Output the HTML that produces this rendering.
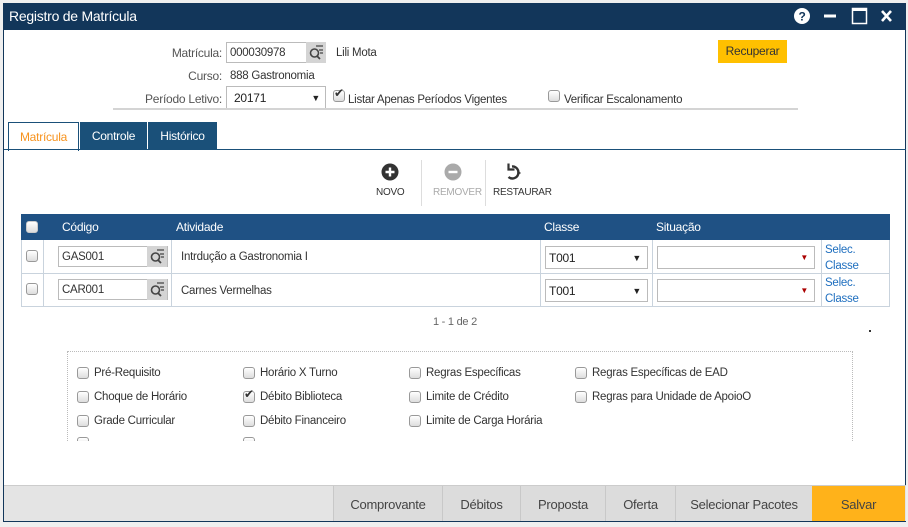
<!DOCTYPE html>
<html><head><meta charset="utf-8">
<style>
*{box-sizing:border-box;margin:0;padding:0}
body{width:908px;height:527px;background:#efefef;font-family:"Liberation Sans",sans-serif;font-size:11px;color:#333;position:relative;overflow:hidden;letter-spacing:-0.25px}
.a{position:absolute}
.win{left:3px;top:3px;width:903px;height:519px;background:#fff;border:1px solid #12365a}
.title{left:3px;top:3px;width:903px;height:27px;background:#12365a;color:#fff;font-size:14px;line-height:27px;padding-left:6px}
.t{white-space:nowrap}
.inp{border:1px solid #bbb;background:#fff;height:21px;line-height:19px;padding-left:3px}
.srch{background:#d4d4d4}
.cb{width:12px;height:12px;border:1px solid #999;border-radius:3px;background:linear-gradient(#fff,#ddd)}
.tab{top:122px;height:28px;line-height:28px;text-align:center;font-size:12px;color:#fff;background:#1a5079}
.hdr{left:21px;top:214px;width:869px;height:26px;background:#1f5184;color:#fff;font-size:12px}
.row{left:21px;width:869px;height:34px;border:1px solid #c9d3dd;border-top:none}
.vl{position:absolute;top:0;bottom:0;width:1px;background:#c9d3dd}
.btm{top:486px;height:35px;line-height:37px;text-align:center;font-size:13px;color:#444;background:#dcdcdc;border-left:1px solid #c8c8c8}
.link{color:#1f6fbf;font-size:11.5px;line-height:16px}
</style></head><body>
<div class="a win"></div>
<div class="a title">Registro de Matrícula</div>
<svg class="a" style="left:792px;top:7px" width="110" height="18">
<circle cx="10" cy="9" r="8" fill="#fff"/><text x="10" y="13.5" font-size="12" font-weight="bold" text-anchor="middle" fill="#12365a" font-family="Liberation Sans">?</text>
<rect x="32" y="7.5" width="12" height="3" fill="#fff"/>
<rect x="60.5" y="1.5" width="14" height="15" fill="none" stroke="#fff" stroke-width="1.5"/><rect x="60" y="1" width="15" height="3" fill="#fff"/>
<path d="M90 4l9 10M99 4l-9 10" stroke="#fff" stroke-width="2.6"/>
</svg>

<div class="a t" style="right:686px;top:46px;font-size:12px;color:#555">Matrícula:</div>
<div class="a inp" style="left:226px;top:42px;width:82px;font-size:11.5px;line-height:21px">000030978</div>
<div class="a srch" style="left:306px;top:42px;width:20px;height:21px"></div>
<svg class="a" style="left:308px;top:44px" width="16" height="16"><circle cx="6.5" cy="9" r="4" fill="none" stroke="#444" stroke-width="1.6"/><path d="M9 12l3 3" stroke="#444" stroke-width="1.8"/><path d="M8 2h7M11 6h4M12 9h3" stroke="#444" stroke-width="1.3"/></svg>
<div class="a t" style="left:336px;top:47px;font-size:11.5px">Lili Mota</div>
<div class="a" style="left:718px;top:40px;width:69px;height:23px;background:#ffc000;color:#333;font-size:12px;line-height:23px;text-align:center">Recuperar</div>
<div class="a t" style="right:686px;top:69px;font-size:12px;color:#555">Curso:</div>
<div class="a t" style="left:230px;top:70px;font-size:11.5px">888 Gastronomia</div>
<div class="a t" style="right:686px;top:92px;font-size:12px;color:#555">Período Letivo:</div>
<div class="a inp" style="left:226px;top:86px;width:100px;height:23px;line-height:22px;padding-left:7px;font-size:12px;color:#222">20171<span style="position:absolute;right:5px;font-size:9px">▼</span></div>
<div class="a cb" style="left:333px;top:90px"></div><div class="a t" style="left:334px;top:86px;font-size:12px">✔</div>
<div class="a t" style="left:348px;top:94px;font-size:11.5px">Listar Apenas Períodos Vigentes</div>
<div class="a cb" style="left:548px;top:90px"></div>
<div class="a t" style="left:564px;top:94px;font-size:11.5px">Verificar Escalonamento</div>
<div class="a" style="left:113px;top:108px;width:685px;height:2px;background:#d4d4d4"></div>

<div class="a tab" style="left:8px;width:71px;background:#fff;color:#f7931e;border:1px solid #1a5079;border-bottom:none;height:29px">Matrícula</div>
<div class="a tab" style="left:80px;width:67px">Controle</div>
<div class="a tab" style="left:148px;width:69px">Histórico</div>
<div class="a" style="left:4px;top:149px;width:902px;height:1px;background:#1a5079"></div>

<svg class="a" style="left:380px;top:162px" width="170" height="20">
<circle cx="10" cy="10" r="8.5" fill="#333"/><path d="M10 5.5v9M5.5 10h9" stroke="#fff" stroke-width="2.4"/>
<circle cx="73" cy="10" r="8.5" fill="#aaa"/><path d="M68.5 10h9" stroke="#fff" stroke-width="2.4"/>
<path d="M132 4.5a6 6 0 1 1-3.5 10.5" fill="none" stroke="#333" stroke-width="2.4"/><path d="M128.5 1.5v6h6" fill="none" stroke="#333" stroke-width="2.2"/><path d="M138 7.5v3.5h2.5" fill="none" stroke="#333" stroke-width="1.5"/>
</svg>
<div class="a" style="left:421px;top:160px;width:1px;height:46px;background:#ddd"></div>
<div class="a" style="left:485px;top:160px;width:1px;height:46px;background:#ddd"></div>
<div class="a t" style="left:376px;top:187px;font-size:10px;color:#333">NOVO</div>
<div class="a t" style="left:433px;top:187px;font-size:10px;color:#aaa">REMOVER</div>
<div class="a t" style="left:493px;top:187px;font-size:10px;color:#333">RESTAURAR</div>

<div class="a hdr">
<div class="a cb" style="left:5px;top:7px;border-color:#ccc"></div>
<span class="a" style="left:41px;top:6px">Código</span>
<span class="a" style="left:155px;top:6px">Atividade</span>
<span class="a" style="left:523px;top:6px">Classe</span>
<span class="a" style="left:635px;top:6px">Situação</span>
</div>
<div class="a row" style="top:240px"></div>
<div class="a row" style="top:273px"></div>
<div class="a" style="left:21px;top:240px;width:869px;height:67px">
<div class="vl" style="left:22px"></div><div class="vl" style="left:150px"></div><div class="vl" style="left:519px"></div><div class="vl" style="left:631px"></div><div class="vl" style="left:800px"></div>
</div>

<div class="a cb" style="left:26px;top:250px"></div>
<div class="a inp" style="left:58px;top:246px;width:110px;font-size:11.5px;line-height:21px">GAS001</div>
<div class="a srch" style="left:147px;top:246px;width:20px;height:21px"></div>
<svg class="a" style="left:149px;top:248px" width="16" height="16"><circle cx="6.5" cy="9" r="4" fill="none" stroke="#444" stroke-width="1.6"/><path d="M9 12l3 3" stroke="#444" stroke-width="1.8"/><path d="M8 2h7M11 6h4M12 9h3" stroke="#444" stroke-width="1.3"/></svg>
<div class="a t" style="left:181px;top:251px;font-size:11.5px">Intrdução a Gastronomia I</div>
<div class="a inp" style="left:545px;top:246px;width:103px;height:23px;line-height:22px;font-size:12px;color:#222">T001<span style="position:absolute;right:6px;font-size:9px">▼</span></div>
<div class="a inp" style="left:657px;top:246px;width:158px;height:23px;line-height:22px"><span style="position:absolute;right:6px;font-size:8px;color:#a00">▼</span></div>
<div class="a link" style="left:825px;top:242px">Selec.<br>Classe</div>

<div class="a cb" style="left:26px;top:283px"></div>
<div class="a inp" style="left:58px;top:279px;width:110px;font-size:11.5px;line-height:21px">CAR001</div>
<div class="a srch" style="left:147px;top:279px;width:20px;height:21px"></div>
<svg class="a" style="left:149px;top:281px" width="16" height="16"><circle cx="6.5" cy="9" r="4" fill="none" stroke="#444" stroke-width="1.6"/><path d="M9 12l3 3" stroke="#444" stroke-width="1.8"/><path d="M8 2h7M11 6h4M12 9h3" stroke="#444" stroke-width="1.3"/></svg>
<div class="a t" style="left:181px;top:285px;font-size:11.5px">Carnes Vermelhas</div>
<div class="a inp" style="left:545px;top:279px;width:103px;height:23px;line-height:22px;font-size:12px;color:#222">T001<span style="position:absolute;right:6px;font-size:9px">▼</span></div>
<div class="a inp" style="left:657px;top:279px;width:158px;height:23px;line-height:22px"><span style="position:absolute;right:6px;font-size:8px;color:#a00">▼</span></div>
<div class="a link" style="left:825px;top:275px">Selec.<br>Classe</div>

<div class="a t" style="left:433px;top:316px;font-size:11px;color:#666">1 - 1 de 2</div>
<div class="a" style="left:869px;top:330px;width:2px;height:2px;background:#333"></div>

<div class="a" style="left:67px;top:351px;width:786px;height:90px;border:1px dotted #bbb;border-bottom:none;overflow:hidden">
<div class="a cb" style="left:9px;top:15px"></div><div class="a t" style="left:26px;top:15px;font-size:11.5px">Pré-Requisito</div>
<div class="a cb" style="left:175px;top:15px"></div><div class="a t" style="left:192px;top:15px;font-size:11.5px">Horário X Turno</div>
<div class="a cb" style="left:341px;top:15px"></div><div class="a t" style="left:358px;top:15px;font-size:11.5px">Regras Específicas</div>
<div class="a cb" style="left:507px;top:15px"></div><div class="a t" style="left:524px;top:15px;font-size:11.5px">Regras Específicas de EAD</div>
<div class="a cb" style="left:9px;top:39px"></div><div class="a t" style="left:26px;top:39px;font-size:11.5px">Choque de Horário</div>
<div class="a cb" style="left:175px;top:39px"></div><div class="a t" style="left:176px;top:35px;font-size:12px">✔</div><div class="a t" style="left:192px;top:39px;font-size:11.5px">Débito Biblioteca</div>
<div class="a cb" style="left:341px;top:39px"></div><div class="a t" style="left:358px;top:39px;font-size:11.5px">Limite de Crédito</div>
<div class="a cb" style="left:507px;top:39px"></div><div class="a t" style="left:524px;top:39px;font-size:11.5px">Regras para Unidade de ApoioO</div>
<div class="a cb" style="left:9px;top:63px"></div><div class="a t" style="left:26px;top:63px;font-size:11.5px">Grade Curricular</div>
<div class="a cb" style="left:175px;top:63px"></div><div class="a t" style="left:192px;top:63px;font-size:11.5px">Débito Financeiro</div>
<div class="a cb" style="left:341px;top:63px"></div><div class="a t" style="left:358px;top:63px;font-size:11.5px">Limite de Carga Horária</div>
<div class="a cb" style="left:9px;top:85px"></div><div class="a cb" style="left:175px;top:85px"></div>
</div>

<div class="a" style="left:4px;top:485px;width:902px;height:36px;background:#e4e4e4;border-top:1px solid #ccc"></div>
<div class="a btm" style="left:333px;width:109px">Comprovante</div>
<div class="a btm" style="left:442px;width:78px">Débitos</div>
<div class="a btm" style="left:520px;width:85px">Proposta</div>
<div class="a btm" style="left:605px;width:70px">Oferta</div>
<div class="a btm" style="left:675px;width:137px">Selecionar Pacotes</div>
<div class="a btm" style="left:812px;width:93px;background:#ffb21a;border-left:none">Salvar</div>
</body></html>
